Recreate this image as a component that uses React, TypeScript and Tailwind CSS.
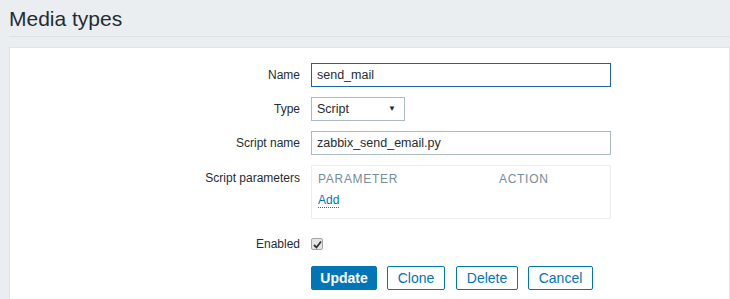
import React from "react";

export default function App() {
  const rowLabel = "w-[301px] shrink-0 pr-[11px] text-right";
  return (
    <div className="h-[299px] w-[730px] overflow-hidden bg-[#ebeef0] font-['Liberation_Sans',Arial,sans-serif] text-[12px] text-[#1f2c33]">
      <div className="ml-[9px] border-b border-[#dde2e5] pt-[6px] pb-[5px]">
        <h1 className="text-[21px] leading-[25px] text-[#1f2c33]">Media types</h1>
      </div>
      <div className="ml-[9px] mt-[10px] h-[260px] border border-[#dfe4e7] bg-white pt-[15px]">
        <div className="flex items-center">
          <label className={rowLabel}>Name</label>
          <div className="h-[24px] w-[300px] border border-[#1f65a6] px-[5px] text-[12.5px] leading-[22px]">send_mail</div>
        </div>
        <div className="mt-[10px] flex items-center">
          <label className={rowLabel}>Type</label>
          <div className="flex h-[24px] w-[94px] items-center justify-between border border-[#acbbc2] pl-[5px] pr-[8px] text-[12.5px]">
            <span>Script</span>
            <span className="text-[8px]">▼</span>
          </div>
        </div>
        <div className="mt-[10px] flex items-center">
          <label className={rowLabel}>Script name</label>
          <div className="h-[24px] w-[300px] border border-[#acbbc2] px-[5px] text-[12.5px] leading-[22px]">zabbix_send_email.py</div>
        </div>
        <div className="mt-[10px] flex items-start">
          <label className={`${rowLabel} pt-[4px]`}>Script parameters</label>
          <div className="h-[54px] w-[300px] border border-[#ebeef0] px-[6px] pt-[4px]">
            <div className="flex text-[#768d99] tracking-[0.7px]">
              <span className="w-[181px]">PARAMETER</span>
              <span>ACTION</span>
            </div>
            <a className="mt-[5px] inline-block border-b border-dotted border-[#0275b8] leading-[14px] text-[#0275b8]">Add</a>
          </div>
        </div>
        <div className="mt-[16px] flex items-center">
          <label className={rowLabel}>Enabled</label>
          <div className="flex h-[12px] w-[12px] items-center justify-center rounded-[2px] border border-[#a4a4a4] bg-[#e5e5e5]">
            <svg width="9" height="9" viewBox="0 0 9 9">
              <path d="M1 5 L3.5 7.5 L8 1.5" fill="none" stroke="#333" strokeWidth="1.8" />
            </svg>
          </div>
        </div>
        <div className="mt-[13px] flex gap-[10px] pl-[301px] text-[14px]">
          <button className="h-[24px] w-[66px] rounded-[2px] border border-[#0275b8] bg-[#0275b8] font-bold text-white">Update</button>
          <button className="h-[24px] w-[58px] rounded-[2px] border border-[#0275b8] bg-white text-[#0275b8]">Clone</button>
          <button className="ml-[1px] h-[24px] w-[62px] rounded-[2px] border border-[#0275b8] bg-white text-[#0275b8]">Delete</button>
          <button className="h-[24px] w-[65px] rounded-[2px] border border-[#0275b8] bg-white text-[#0275b8]">Cancel</button>
        </div>
      </div>
    </div>
  );
}
